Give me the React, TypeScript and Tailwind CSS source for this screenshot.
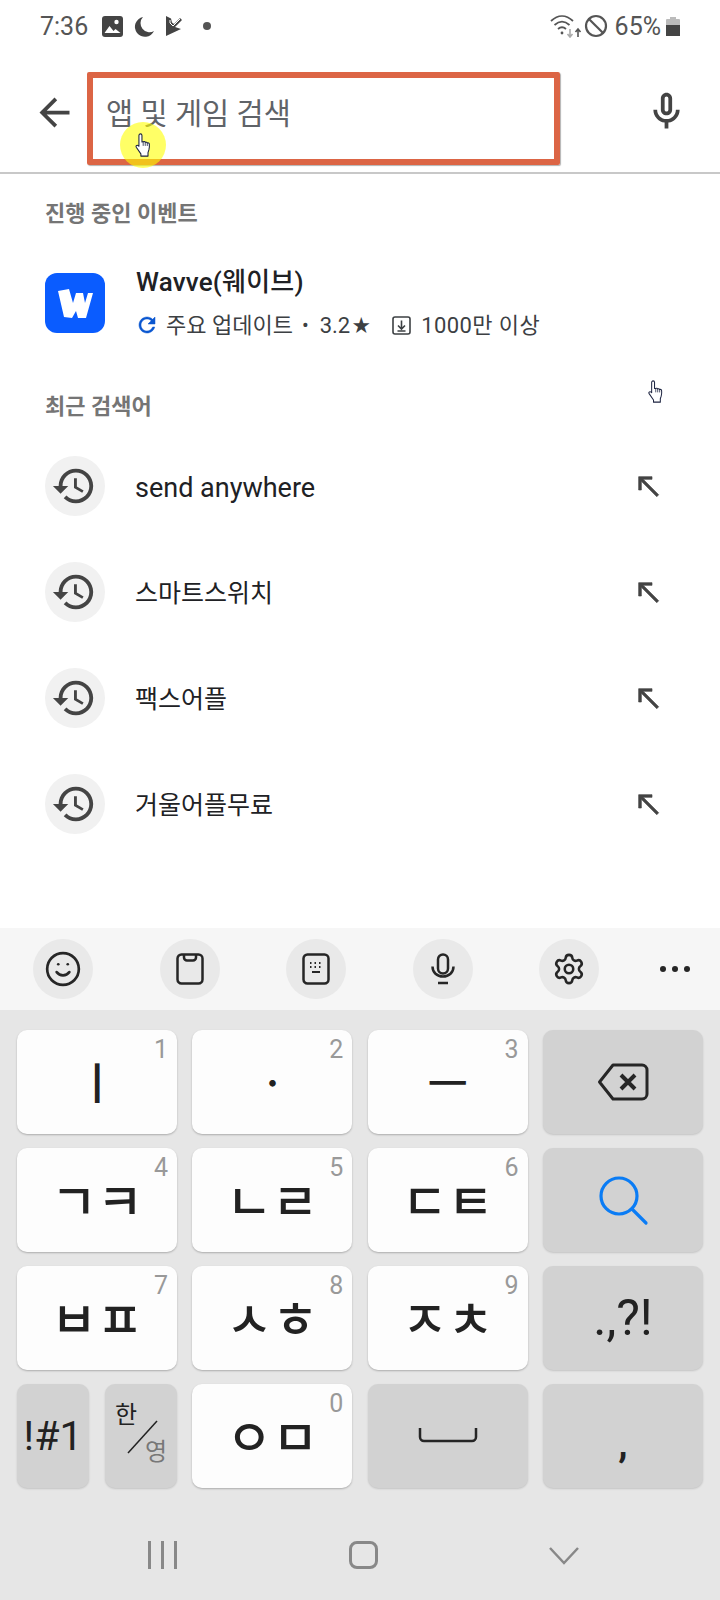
import React from 'react';
import { Ban, Settings, Smile } from 'lucide-react';

const FONT = "font-['Roboto','Noto_Sans_CJK_KR',sans-serif]";

const recent = [
  { label: 'send anywhere', size: 'text-[27px]' },
  { label: '스마트스위치', size: 'text-[25px]' },
  { label: '팩스어플', size: 'text-[25px]' },
  { label: '거울어플무료', size: 'text-[25px]' },
];

const MaterialIcon = ({ d, size, className, bold }: { d: string; size: number; className?: string; bold?: boolean }) => (
  <svg width={size} height={size} viewBox="0 0 24 24" fill="currentColor" stroke={bold ? 'currentColor' : 'none'} strokeWidth={bold ? 0.5 : 0} className={className}>
    <path d={d} />
  </svg>
);

const BACK = 'M20 11H7.83l5.59-5.59L12 4l-8 8 8 8 1.41-1.41L7.83 13H20v-2z';
const MIC =
  'M12 14c1.66 0 3-1.34 3-3V5c0-1.66-1.34-3-3-3S9 3.34 9 5v6c0 1.66 1.34 3 3 3zm-1-9c0-.55.45-1 1-1s1 .45 1 1v6c0 .55-.45 1-1 1s-1-.45-1-1V5zm6 6c0 2.76-2.24 5-5 5s-5-2.24-5-5H5c0 3.53 2.61 6.43 6 6.92V21h2v-3.08c3.39-.49 6-3.39 6-6.92h-2z';
const HISTORY =
  'M13 3c-4.97 0-9 4.03-9 9H1l3.89 3.89.07.14L9 12H6c0-3.87 3.13-7 7-7s7 3.13 7 7-3.13 7-7 7c-1.93 0-3.68-.79-4.94-2.06l-1.42 1.42C8.27 19.99 10.51 21 13 21c4.97 0 9-4.03 9-9s-4.03-9-9-9zm-1 5v5l4.28 2.54.72-1.21-3.5-2.08V8H12z';
const NORTH_WEST = 'M5 15h2V8.41L18.59 20 20 18.59 8.41 7H15V5H5v10z';
const REFRESH =
  'M17.65 6.35C16.2 4.9 14.21 4 12 4c-4.42 0-7.99 3.58-7.99 8s3.57 8 7.99 8c3.73 0 6.84-2.55 7.73-6h-2.08c-.82 2.33-3.04 4-5.65 4-3.31 0-6-2.69-6-6s2.69-6 6-6c1.66 0 3.14.69 4.22 1.78L13 11h7V4l-2.35 2.35z';

const Hand = ({ className }: { className: string }) => (
  <svg viewBox="0 0 20 27" className={className} fill="#fff" stroke="#1c2340" strokeWidth="1.2" strokeLinejoin="round">
    <path d="M6 1c1 0 1.7.7 1.7 1.7V10l1.4-.1c.9-.6 2-.3 2.3.6.9-.5 2-.2 2.3.7 1-.5 2.1.1 2.3 1.2.2 2.3.1 4.6-.5 6.6l-1 3V26H6.5v-2.5L1.3 16c-.9-1.5.5-2.8 1.900-2l1.100.9V2.700C4.300 1.700 5 1 6 1z" />
    <path d="M9.100 10v4.500M11.400 10.500v4M13.700 11.200v3.400" fill="none" strokeWidth="0.9" />
  </svg>
);

const StatusBar = () => (
  <div className="h-[52px] flex items-center justify-between pl-[40px] pr-[40px] text-[#555555]">
    <div className="flex items-center">
      <span className="text-[25px] leading-none w-[62px]">7:36</span>
      <svg width="21" height="21" viewBox="0 0 21 21" className="mr-[11px]">
        <rect width="21" height="21" rx="3" fill="#444" />
        <circle cx="14.500" cy="6" r="2.200" fill="#fff" />
        <path d="M2.500 17l5-7 4 5 2-2 5 4z" fill="#fff" />
      </svg>
      <svg width="20" height="21" viewBox="0 0 20 21" className="mr-[12px]">
        <path d="M9 1a10 10 0 1 0 11 14A9 9 0 0 1 9 1z" fill="#444" />
      </svg>
      <svg width="19" height="20" viewBox="0 0 19 20" className="mr-[18px]">
        <path d="M0 0l5 2.500 1 4 2 1.500 6-6 2 2-7 7 6 2-15 7z" fill="#444" />
        <path d="M4 4v3l3 3 7-7" fill="none" stroke="#fff" strokeWidth="1" />
      </svg>
      <span className="w-[8px] h-[8px] rounded-full bg-[#555555]" />
    </div>
    <div className="flex items-center">
      <svg width="32" height="24" viewBox="0 0 32 24" fill="none" className="mr-[2px]" stroke="#555" strokeWidth="1.800">
        <path d="M1 7c7-6.500 15-6.500 22 0M4.500 11c5-4.500 10-4.500 15 0M8 15c2.500-2.200 5.500-2.200 8 0" />
        <circle cx="12" cy="19" r="1.400" fill="#555" stroke="none" />
        <path d="M28 23v-7M25.500 18l2.500-3 2.500 3" strokeWidth="1.600" />
        <path d="M20 15v7M17.500 20l2.500 3 2.500-3" strokeWidth="1.600" stroke="#aaa" />
      </svg>
      <Ban size={24} color="#555" strokeWidth={2.2} className="mr-[7px]" />
      <span className="text-[25px] leading-none mr-[5px]">65%</span>
      <div className="flex flex-col items-center">
        <div className="w-[6px] h-[2px] bg-[#bbbbbb]" />
        <div className="w-[14px] h-[17px] rounded-[1px] bg-[#bbbbbb] flex items-end">
          <div className="w-full h-[11px] bg-[#444444]" />
        </div>
      </div>
    </div>
  </div>
);

const SearchHeader = () => (
  <div className="h-[122px] flex items-start border-b-2 border-[#c8c8c8] pt-[20px] pl-[32px]">
    <MaterialIcon d={BACK} size={45} className="text-[#444444] mt-[18px]" />
    <div className="ml-[10px] w-[473px] h-[93px] border-[6px] border-[#dc6545] rounded-[2px] shadow-[1px_1px_1px_rgba(0,0,0,0.3)] pl-[13px] pt-[12px]">
      <span className="text-[29.5px] leading-[48px] text-[#5f6368]">앱 및 게임 검색</span>
    </div>
    <MaterialIcon d={MIC} size={45} className="text-[#444444] ml-[84px] mt-[17px]" />
  </div>
);

const SectionLabel = ({ children, className }: { children: React.ReactNode; className: string }) => (
  <div className={`h-[28px] pl-[45px] text-[22px] leading-[28px] font-bold text-[#757575] ${className}`}>{children}</div>
);

const AppRow = () => (
  <div className="mt-[45px] h-[60px] flex items-center pl-[45px]">
    <div className="w-[60px] h-[60px] rounded-[12px] bg-[#0a5cff] flex items-center justify-center">
      <svg width="60" height="60" viewBox="0 0 60 60">
        <path d="M13 18l11-2 4 14 3-10h7l2 10 3-10h5l-7 25h-8l-2-7-4 7-8-1z" fill="#fff" />
      </svg>
    </div>
    <div className="ml-[31px]">
      <div className="text-[26px] leading-[30px] font-medium text-[#202124] h-[30px] tracking-[0.2px]">Wavve(웨이브)</div>
      <div className="mt-[14px] flex items-center h-[28px] text-[22px] text-[#3c4043]">
        <MaterialIcon d={REFRESH} size={24} bold className="text-[#0b57d0] -ml-[1px]" />
        <span className="ml-[7px]">주요 업데이트</span>
        <span className="ml-[9px] text-[20px]">•</span>
        <span className="ml-[11px]">3.2</span>
        <span className="ml-[2px] text-[18px]">★</span>
        <svg width="19" height="19" viewBox="0 0 19 19" fill="none" stroke="#3c4043" strokeWidth="1.600" className="ml-[22px]">
          <rect x="1" y="1" width="17" height="17" rx="2" />
          <path d="M9.500 4.500v8M6 9.500l3.500 3.500 3.500-3.500M5.500 15h8" />
        </svg>
        <span className="ml-[10px] tracking-[0.4px]">1000만 이상</span>
      </div>
    </div>
  </div>
);

const RecentRow = ({ label, size }: { label: string; size: string }) => (
  <div className="h-[106px] flex items-center pl-[45px] pr-[56px]">
    <div className="w-[60px] h-[60px] rounded-full bg-[#f1f1f1] flex items-center justify-center">
      <MaterialIcon d={HISTORY} size={46} className="text-[#444444] -ml-[2px]" />
    </div>
    <span className={`ml-[30px] pt-[4px] flex-1 text-[#202124] ${size}`}>{label}</span>
    <MaterialIcon d={NORTH_WEST} size={32} bold className="text-[#444444]" />
  </div>
);

const ToolCircle = ({ children }: { children: React.ReactNode }) => (
  <div className="w-[60px] h-[60px] rounded-full bg-[#e9e9e9] flex items-center justify-center">{children}</div>
);

const Toolbar = () => (
  <div className="h-[82px] bg-[#f6f6f6] flex items-center pl-[33px] gap-x-[66.5px]">
    <ToolCircle>
      <Smile size={38} color="#262626" strokeWidth={1.7} />
    </ToolCircle>
    <ToolCircle>
      <svg width="28" height="32" viewBox="0 0 28 32" fill="none" stroke="#262626" strokeWidth="2.500">
        <rect x="1.500" y="1.500" width="25" height="29" rx="4" />
        <path d="M8 1.500v3a3 3 0 0 0 3 3h6a3 3 0 0 0 3-3v-3" />
      </svg>
    </ToolCircle>
    <ToolCircle>
      <svg width="28" height="32" viewBox="0 0 28 32" fill="none" stroke="#262626" strokeWidth="2.500">
        <rect x="1.500" y="1.500" width="25" height="29" rx="4" />
        <path d="M8 10h1.500M12.500 10H14M17 10h1.500M8 14h1.500M12.500 14H14M17 14h1.500M10 19h8" strokeWidth="2" />
      </svg>
    </ToolCircle>
    <ToolCircle>
      <svg width="24" height="32" viewBox="0 0 24 32" fill="none" stroke="#262626" strokeWidth="2.500">
        <rect x="7" y="1.500" width="10" height="19" rx="5" />
        <path d="M1.500 13.500c0 6 4.500 10 10.500 10s10.500-4 10.500-10M7 30h10" />
      </svg>
    </ToolCircle>
    <ToolCircle>
      <Settings size={34} color="#262626" strokeWidth={1.8} />
    </ToolCircle>
    <div className="flex gap-x-[6px] -ml-[6px]">
      <span className="w-[6px] h-[6px] rounded-full bg-[#262626]" />
      <span className="w-[6px] h-[6px] rounded-full bg-[#262626]" />
      <span className="w-[6px] h-[6px] rounded-full bg-[#262626]" />
    </div>
  </div>
);

const LetterKey = ({ label, num, size = 'text-[50px]' }: { label: string; num: string; size?: string }) => (
  <div className="relative rounded-[10px] bg-[#fdfdfd] shadow-[0_1px_2px_rgba(0,0,0,0.25)] flex items-center justify-center">
    <span className="absolute top-[5px] right-[9px] text-[25px] leading-[30px] text-[#999999]">{num}</span>
    <span className={`pt-[6px] leading-none font-medium text-[#222222] ${size}`}>{label}</span>
  </div>
);

const FnKey = ({ children, className = '' }: { children: React.ReactNode; className?: string }) => (
  <div className={`relative rounded-[10px] bg-[#d2d2d2] shadow-[0_1px_2px_rgba(0,0,0,0.15)] flex items-center justify-center ${className}`}>
    {children}
  </div>
);

const KeyGrid = () => (
  <div className="pt-[20px] px-[17px] grid grid-cols-4 gap-x-[15.33px] gap-y-[14px] auto-rows-[104px]">
    <LetterKey label="ㅣ" num="1" size="text-[44px]" />
    <LetterKey label="ㆍ" num="2" size="text-[44px]" />
    <LetterKey label="ㅡ" num="3" size="text-[44px]" />
    <FnKey>
      <svg width="52" height="40" viewBox="0 0 52 40" fill="none" stroke="#262626" strokeWidth="3" strokeLinejoin="round">
        <path d="M2.500 20L16 3h29a5 5 0 0 1 5 5v24a5 5 0 0 1-5 5H16z" />
        <path d="M24 13l14 14M38 13L24 27" strokeWidth="4" />
      </svg>
    </FnKey>

    <LetterKey label="ㄱㅋ" num="4" />
    <LetterKey label="ㄴㄹ" num="5" />
    <LetterKey label="ㄷㅌ" num="6" />
    <FnKey>
      <svg width="52" height="52" viewBox="0 0 52 52" fill="none" stroke="#0a7cf5" strokeWidth="3.200" strokeLinecap="round">
        <circle cx="22" cy="22" r="18" />
        <path d="M35 35l14 14" />
      </svg>
    </FnKey>

    <LetterKey label="ㅂㅍ" num="7" />
    <LetterKey label="ㅅㅎ" num="8" />
    <LetterKey label="ㅈㅊ" num="9" />
    <FnKey>
      <span className="text-[50px] leading-none text-[#222222]">.,?!</span>
    </FnKey>

    <div className="flex gap-x-[16px]">
      <FnKey className="w-[72px]">
        <span className="text-[41px] leading-none text-[#222222]">!#1</span>
      </FnKey>
      <FnKey className="w-[72px]">
        <span className="absolute left-[10px] top-[17px] text-[24px] leading-[28px] text-[#222222]">한</span>
        <svg width="32" height="34" viewBox="0 0 32 34" className="absolute left-[22px] top-[36px]">
          <path d="M1 33L30 1" stroke="#222" strokeWidth="1.500" />
        </svg>
        <span className="absolute left-[40px] top-[54px] text-[24px] leading-[28px] text-[#777777]">영</span>
      </FnKey>
    </div>
    <LetterKey label="ㅇㅁ" num="0" />
    <FnKey>
      <svg width="60" height="16" viewBox="0 0 60 16" fill="none" stroke="#262626" strokeWidth="2.500" className="-mt-[2px]">
        <path d="M2 1v9a4 4 0 0 0 4 4h48a4 4 0 0 0 4-4V1" />
      </svg>
    </FnKey>
    <FnKey>
      <span className="text-[38px] leading-none font-bold text-[#222222] mt-[16px]">,</span>
    </FnKey>
  </div>
);

const NavBar = () => (
  <div className="flex-1 flex items-start pt-[53px] text-[#888888]">
    <div className="ml-[148px] flex gap-x-[10px] h-[28px]">
      <span className="w-[3px] h-full bg-[#888888]" />
      <span className="w-[3px] h-full bg-[#888888]" />
      <span className="w-[3px] h-full bg-[#888888]" />
    </div>
    <div className="ml-[172px] w-[29px] h-[28px] rounded-[8px] border-[3px] border-[#888888]" />
    <svg width="30" height="18" viewBox="0 0 30 18" fill="none" stroke="#888888" strokeWidth="2.500" className="ml-[171px] mt-[6px]">
      <path d="M1 1l14 15L29 1" />
    </svg>
  </div>
);

export default function App() {
  return (
    <div className={`relative w-[720px] h-[1600px] overflow-hidden bg-white flex flex-col ${FONT}`}>
      <StatusBar />
      <SearchHeader />
      <SectionLabel className="mt-[26px]">진행 중인 이벤트</SectionLabel>
      <AppRow />
      <SectionLabel className="mt-[60px]">최근 검색어</SectionLabel>
      <div className="mt-[12px]">
        {recent.map(item => (
          <RecentRow key={item.label} label={item.label} size={item.size} />
        ))}
      </div>
      <div className="flex-1" />
      <Toolbar />
      <div className="h-[590px] bg-[#e6e6e6] flex flex-col">
        <KeyGrid />
        <NavBar />
      </div>

      {/* screen-recording pointer marks */}
      <div className="absolute left-[120px] top-[122px] w-[46px] h-[46px] rounded-full bg-[#ffff00]/60" />
      <Hand className="absolute left-[135px] top-[133px] w-[18px] h-[24px]" />
      <Hand className="absolute left-[648px] top-[380px] w-[17px] h-[23px]" />
    </div>
  );
}
